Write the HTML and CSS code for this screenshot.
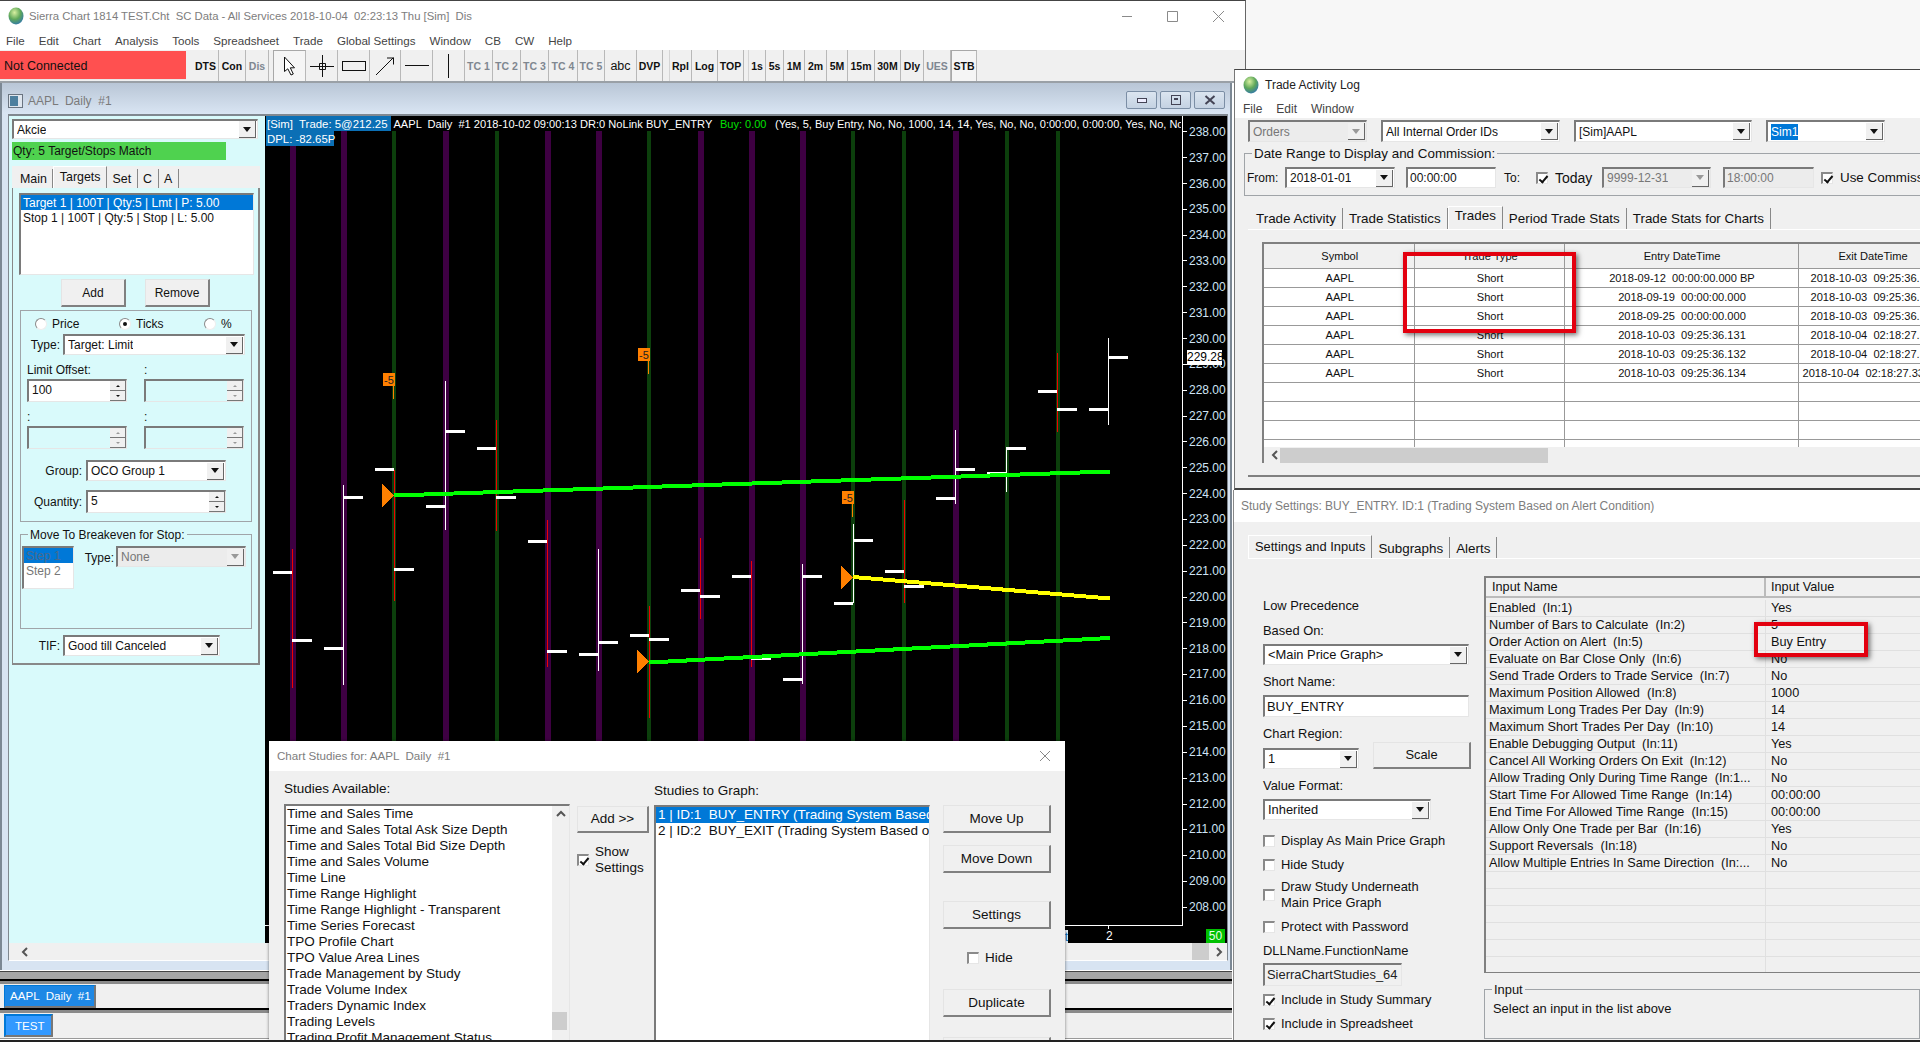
FILE: index.html
```html
<!DOCTYPE html>
<html lang="en">
  <head>
    <meta charset="UTF-8" />
    <title>Sierra Chart 1814 TEST.Cht</title>
    <link rel="stylesheet" href="styles.css">
  </head>
  <body>
    <div class="desktop">

      <!-- main window -->
      <div class="window main-window">
        <div class="titlebar">
          <svg class="globe" viewBox="0 0 16 18"><defs><radialGradient id="globeFill" cx="0.4" cy="0.3" r="0.8"><stop offset="0" stop-color="#d8f0a0"/><stop offset="0.5" stop-color="#5fa85a"/><stop offset="1" stop-color="#2a6fb8"/></radialGradient></defs><ellipse cx="8" cy="9" rx="7.5" ry="8.5" fill="url(#globeFill)"/></svg>
          <span class="title-text">Sierra Chart 1814 TEST.Cht  SC Data - All Services 2018-10-04  02:23:13 Thu [Sim]  Dis</span>
          <div class="window-controls">
            <svg viewBox="0 0 107 14" width="107" height="14"><path d="M0 7.5H10M45.5 2.5H55.5V12.5H45.5ZM91 2L102 13M102 2L91 13" fill="none" stroke="#8a8a8a"/></svg>
          </div>
        </div>
        <div class="menubar main-menu">
          <span>File</span><span>Edit</span><span>Chart</span><span>Analysis</span><span>Tools</span><span>Spreadsheet</span><span>Trade</span><span>Global Settings</span><span>Window</span><span>CB</span><span>CW</span><span>Help</span>
        </div>

        <div class="toolbar">
          <div class="status-box">Not Connected</div>
          <div class="tool-grid">
            <div class="tool">DTS</div><div class="tool">Con</div><div class="tool off">Dis</div>
            <div class="tool gap pressed"><svg width="13" height="20" viewBox="0 0 13 20"><path d="M1.5 1V15.5L4.8 12.8L8 19L10.3 18L7.3 11.8H11.5Z" fill="#fff" stroke="#111"/></svg></div>
            <div class="tool"><svg width="26" height="24" viewBox="0 0 26 24"><path d="M1 12.5H25M13.5 1V23M10.5 9.5H16.5V15.5H10.5Z" fill="none" stroke="#111"/></svg></div>
            <div class="tool"><svg width="26" height="12" viewBox="0 0 26 12"><rect x="1.5" y="1.5" width="23" height="9" fill="none" stroke="#111"/></svg></div>
            <div class="tool"><svg width="20" height="20" viewBox="0 0 20 20"><path d="M1 19L18.5 1.5M12 2H18.5V8.5" fill="none" stroke="#111"/></svg></div>
            <div class="tool"><svg width="24" height="3" viewBox="0 0 24 3"><path d="M0 1.5H24" stroke="#111"/></svg></div>
            <div class="tool"><svg width="3" height="24" viewBox="0 0 3 24"><path d="M1.5 0V24" stroke="#111"/></svg></div>
            <div class="tool off">TC 1</div><div class="tool off">TC 2</div><div class="tool off">TC 3</div><div class="tool off">TC 4</div><div class="tool off">TC 5</div>
            <div class="tool plain">abc</div><div class="tool">DVP</div>
            <div class="tool gap wide-gap">Rpl</div><div class="tool">Log</div><div class="tool">TOP</div>
            <div class="tool gap">1s</div><div class="tool">5s</div><div class="tool">1M</div><div class="tool">2m</div><div class="tool">5M</div><div class="tool">15m</div><div class="tool">30M</div><div class="tool">Dly</div><div class="tool off">UES</div><div class="tool pressed">STB</div>
          </div>
        </div>

        <!-- chart child window -->
        <div class="child-window">
          <div class="child-title">
            <svg class="child-icon" width="15" height="14" viewBox="0 0 15 14"><rect x="0.5" y="0.5" width="14" height="13" fill="#dfe6ee" stroke="#6a7480"/><rect x="2" y="2" width="8" height="10" fill="#4d7f9e"/></svg>
            <span class="child-name">AAPL  Daily  #1</span>
            <div class="child-controls">
              <div class="child-btn"><svg width="12" height="8" viewBox="0 0 12 8"><rect x="1.5" y="2.5" width="9" height="4" fill="#eef" stroke="#445"/></svg></div>
              <div class="child-btn"><svg width="12" height="10" viewBox="0 0 12 10"><rect x="1.5" y="0.5" width="9" height="9" fill="none" stroke="#445"/><rect x="4" y="3" width="4" height="2" fill="#445"/></svg></div>
              <div class="child-btn"><svg width="12" height="10" viewBox="0 0 12 10"><path d="M1.5 1L10.5 9M10.5 1L1.5 9" stroke="#445" stroke-width="2"/></svg></div>
            </div>
          </div>
          <div class="child-body">
            <div class="child-main">

              <!-- trade panel -->
              <div class="side-panel">
                <div class="combo w246"><span>Akcie</span><i class="combo-btn"></i></div>
                <div class="qty-bar">Qty: 5 Target/Stops Match</div>
                <div class="tabs panel-tabs">
                  <div class="tab">Main</div><div class="tab active">Targets</div><div class="tab">Set</div><div class="tab">C</div><div class="tab">A</div>
                </div>
                <div class="tab-pane">
                  <div class="listbox target-list">
                    <div class="list-row selected">Target 1 | 100T | Qty:5 | Lmt | P: 5.00</div>
                    <div class="list-row">Stop 1 | 100T | Qty:5 | Stop | L: 5.00</div>
                  </div>
                  <div class="target-buttons">
                    <div class="button">Add</div><div class="button">Remove</div>
                  </div>
                  <div class="groupbox target-box">
                    <div class="radio-row">
                      <div class="radio-item"><i class="radio"></i>Price</div>
                      <div class="radio-item"><i class="radio on"></i>Ticks</div>
                      <div class="radio-item"><i class="radio"></i>%</div>
                    </div>
                    <div class="form-row type-row">
                      <label class="row-label lw41">Type:</label>
                      <div class="combo w182"><span>Target: Limit</span><i class="combo-btn"></i></div>
                    </div>
                    <div class="offset-grid">
                      <div class="offset-cell">
                        <label>Limit Offset:</label>
                        <div class="spin"><span>100</span><div class="spin-btns"><i class="up"></i><i class="down"></i></div></div>
                      </div>
                      <div class="offset-cell">
                        <label>:</label>
                        <div class="spin disabled"><span></span><div class="spin-btns"><i class="up"></i><i class="down"></i></div></div>
                      </div>
                      <div class="offset-cell">
                        <label>:</label>
                        <div class="spin disabled"><span></span><div class="spin-btns"><i class="up"></i><i class="down"></i></div></div>
                      </div>
                      <div class="offset-cell">
                        <label>:</label>
                        <div class="spin disabled"><span></span><div class="spin-btns"><i class="up"></i><i class="down"></i></div></div>
                      </div>
                    </div>
                    <div class="form-row group-row">
                      <label class="row-label lw61">Group:</label>
                      <div class="combo w140"><span>OCO Group 1</span><i class="combo-btn"></i></div>
                    </div>
                    <div class="form-row qty-row">
                      <label class="row-label lw61">Quantity:</label>
                      <div class="spin w140"><span>5</span><div class="spin-btns"><i class="up"></i><i class="down"></i></div></div>
                    </div>
                  </div>
                  <div class="groupbox breakeven-box">
                    <span class="group-title">Move To Breakeven for Stop:</span>
                    <div class="listbox step-list disabled-list">
                      <div class="list-row selected">Step 1</div>
                      <div class="list-row">Step 2</div>
                    </div>
                    <label class="row-label step-type">Type:</label>
                    <div class="combo w130 disabled"><span>None</span><i class="combo-btn"></i></div>
                  </div>
                  <div class="form-row tif-row">
                    <label class="row-label lw48">TIF:</label>
                    <div class="combo w157"><span>Good till Canceled</span><i class="combo-btn"></i></div>
                  </div>
                </div>
              </div>

              <!-- chart -->
              <div class="chart">
                <svg class="chart-canvas" viewBox="265 116 962 829" width="962" height="829" shape-rendering="crispEdges">
                  <path d="M293 131V925M344 131V925M446 131V925M548 131V925M599 131V925M701 131V925M752 131V925M803 131V925M956 131V925" stroke="#3e0042" stroke-width="6"/>
                  <path d="M394 131V925M497 131V925M649 131V925M853 131V925M904 131V925M1007 131V925M1058 131V925" stroke="#0c3f0c" stroke-width="4"/>
                  <path d="M292.5 549V688M394.5 470V601M496.5 420V531M547.5 520V667M649.5 606V718M700.5 538V619M751.5 561V667M904.5 500V603M1057.5 353V432" stroke="#f00000"/>
                  <path d="M343.5 485V685M445.5 381V530M598.5 549V671M802.5 564V684M853.5 524V603M955.5 430V504M1006.5 447V492M1108.5 338V425" stroke="#fff"/>
                  <path d="M273 572.5H292M292 640.5H312M324 648.5H343M343 497.5H363M375 469.5H394M394 569.5H414M426 506.5H445M445 431.5H465M477 448.5H496M496 497.5H516M528 541.5H547M547 651.5H567M579 654.5H598M598 642.5H618M630 635.5H649M649 639.5H669M681 590.5H700M700 596.5H720M732 576.5H751M751 658.5H771M783 679.5H802M802 576.5H822M834 603.5H853M853 540.5H873M885 571.5H904M904 586.5H924M936 498.5H955M955 469.5H975M987 473.5H1006M1006 448.5H1026M1038 391.5H1057M1057 409.5H1077M1089 409.5H1108M1108 357.5H1128" stroke="#fff" stroke-width="3"/>
                  <path d="M394 495.5L1110 471.5M649 662.5L1110 638" stroke="#00ff00" stroke-width="4"/>
                  <path d="M853 577L1110 598.5" stroke="#ffff00" stroke-width="4"/>
                  <path d="M382 484L394 495.5L382 507ZM637 650L649 661.5L637 673ZM841 566L853 577.5L841 589Z" fill="#ff8000"/>
                  <path d="M393.5 386V399M648.5 361V374M852.5 504V517" stroke="#ff8000"/>
                  <rect x="383" y="373" width="12" height="13" fill="#ff8000"/>
                  <rect x="638" y="348" width="12" height="13" fill="#ff8000"/>
                  <rect x="842" y="491" width="12" height="13" fill="#ff8000"/>
                  <g class="flag-text" shape-rendering="auto">
                    <text x="384" y="384">-5</text><text x="639" y="359">-5</text><text x="843" y="502">-5</text>
                  </g>
                  <path d="M1182.5 116V925.5H265M1183 131.5h4M1183 157.5h4M1183 183.5h4M1183 209.5h4M1183 235.5h4M1183 260.5h4M1183 286.5h4M1183 312.5h4M1183 338.5h4M1183 364.5h4M1183 390.5h4M1183 416.5h4M1183 441.5h4M1183 467.5h4M1183 493.5h4M1183 519.5h4M1183 545.5h4M1183 571.5h4M1183 597.5h4M1183 622.5h4M1183 648.5h4M1183 674.5h4M1183 700.5h4M1183 726.5h4M1183 752.5h4M1183 778.5h4M1183 804.5h4M1183 829.5h4M1183 855.5h4M1183 881.5h4M1183 907.5h4M1108.5 925V929" fill="none" stroke="#fff"/>
                </svg>
                <div class="chart-head">
                  <div class="head-line"><span class="head-blue">[Sim]  Trade: 5@212.25</span><span class="head-main"> AAPL  Daily  #1 2018-10-02 09:00:13 DR:0 NoLink BUY_ENTRY</span><span class="head-green">Buy: 0.00</span><span class="head-args">(Yes, 5, Buy Entry, No, No, 1000, 14, 14, Yes, No, No, 0:00:00, 0:00:00, Yes, No, No)</span></div>
                  <div class="head-line"><span class="head-blue dpl">DPL: -82.65P</span></div>
                </div>
                <div class="price-axis">
                  <span>238.00</span><span>237.00</span><span>236.00</span><span>235.00</span><span>234.00</span><span>233.00</span><span>232.00</span><span>231.00</span><span>230.00</span><span>229.00</span><span>228.00</span><span>227.00</span><span>226.00</span><span>225.00</span><span>224.00</span><span>223.00</span><span>222.00</span><span>221.00</span><span>220.00</span><span>219.00</span><span>218.00</span><span>217.00</span><span>216.00</span><span>215.00</span><span>214.00</span><span>213.00</span><span>212.00</span><span>211.00</span><span>210.00</span><span>209.00</span><span>208.00</span>
                </div>
                <div class="last-price">229.28</div>
                <div class="time-month">Oct</div>
                <div class="time-label">2</div>
                <div class="bars-count">50</div>
              </div>
            </div>
            <div class="hscroll child-scroll">
              <svg class="chevron" width="8" height="10" viewBox="0 0 8 10"><path d="M6 1L2 5L6 9" fill="none" stroke="#555" stroke-width="2"/></svg>
              <div class="hscroll-end">
                <div class="thumb"></div>
                <svg class="chevron" width="8" height="10" viewBox="0 0 8 10"><path d="M2 1L6 5L2 9" fill="none" stroke="#555" stroke-width="2"/></svg>
              </div>
            </div>
          </div>
        </div>

        <div class="gray-bar"></div>
        <div class="task-row"><div class="task-btn">AAPL  Daily  #1</div></div>
        <div class="task-row"><div class="task-btn test">TEST</div></div>
      </div>

      <!-- chart studies dialog -->
      <div class="window studies-dialog">
        <div class="titlebar dialog-title">
          <span class="title-text">Chart Studies for: AAPL  Daily  #1</span>
          <svg class="dialog-close" width="12" height="12" viewBox="0 0 12 12"><path d="M1 1L11 11M11 1L1 11" stroke="#888"/></svg>
        </div>
        <div class="dialog-body">
          <div class="dialog-col available-col">
            <label>Studies Available:</label>
            <div class="listbox studies-list">
              <div class="list-rows">
                <div class="list-row tall">Time and Sales Time</div>
                <div class="list-row tall">Time and Sales Total Ask Size Depth</div>
                <div class="list-row tall">Time and Sales Total Bid Size Depth</div>
                <div class="list-row tall">Time and Sales Volume</div>
                <div class="list-row tall">Time Line</div>
                <div class="list-row tall">Time Range Highlight</div>
                <div class="list-row tall">Time Range Highlight - Transparent</div>
                <div class="list-row tall">Time Series Forecast</div>
                <div class="list-row tall">TPO Profile Chart</div>
                <div class="list-row tall">TPO Value Area Lines</div>
                <div class="list-row tall">Trade Management by Study</div>
                <div class="list-row tall">Trade Volume Index</div>
                <div class="list-row tall">Traders Dynamic Index</div>
                <div class="list-row tall">Trading Levels</div>
                <div class="list-row tall">Trading Profit Management Status</div>
              </div>
              <div class="vscroll">
                <svg width="10" height="8" viewBox="0 0 10 8"><path d="M1 6L5 2L9 6" fill="none" stroke="#555" stroke-width="2"/></svg>
                <div class="thumb"></div>
              </div>
            </div>
          </div>
          <div class="dialog-col add-col">
            <div class="button add-button">Add &gt;&gt;</div>
            <div class="check-row show-settings"><i class="check on"></i><span>Show<br>Settings</span></div>
          </div>
          <div class="dialog-col graph-col">
            <label>Studies to Graph:</label>
            <div class="listbox graph-list">
              <div class="list-row selected">1 | ID:1  BUY_ENTRY (Trading System Based on Alert Condition)</div>
              <div class="list-row">2 | ID:2  BUY_EXIT (Trading System Based on Alert Condition)</div>
            </div>
          </div>
          <div class="dialog-col action-col">
            <div class="button move-up">Move Up</div>
            <div class="button move-down">Move Down</div>
            <div class="button settings-btn">Settings</div>
            <div class="check-row hide-check"><i class="check"></i><span>Hide</span></div>
            <div class="button duplicate-btn">Duplicate</div>
            <div class="button next-btn"></div>
          </div>
        </div>
      </div>

      <!-- trade activity log -->
      <div class="window trade-window">
        <div class="titlebar trade-title">
          <svg class="globe" viewBox="0 0 16 18"><ellipse cx="8" cy="9" rx="7.5" ry="8.5" fill="url(#globeFill)"/></svg>
          <span class="title-text dark">Trade Activity Log</span>
        </div>
        <div class="menubar trade-menu"><span>File</span><span>Edit</span><span>Window</span></div>
        <div class="trade-body">
          <div class="combo-strip">
            <div class="combo w119 disabled"><span>Orders</span><i class="combo-btn"></i></div>
            <div class="combo w179"><span>All Internal Order IDs</span><i class="combo-btn"></i></div>
            <div class="combo w178"><span>[Sim]AAPL</span><i class="combo-btn"></i></div>
            <div class="combo w119"><span class="text-selected">Sim1</span><i class="combo-btn"></i></div>
          </div>
          <div class="groupbox date-box">
            <span class="group-title">Date Range to Display and Commission:</span>
            <div class="date-row">
              <label class="from-label">From:</label>
              <div class="combo w110"><span>2018-01-01</span><i class="combo-btn"></i></div>
              <div class="textbox w90"><span>00:00:00</span></div>
              <label class="to-label">To:</label>
              <i class="check on"></i>
              <label class="today-label">Today</label>
              <div class="combo w109 disabled"><span>9999-12-31</span><i class="combo-btn"></i></div>
              <div class="textbox w91 disabled"><span>18:00:00</span></div>
              <i class="check on use-check"></i>
              <label class="use-label">Use Commissions</label>
            </div>
          </div>
          <div class="tabs trade-tabs">
            <div class="tab">Trade Activity</div><div class="tab">Trade Statistics</div><div class="tab active">Trades</div><div class="tab">Period Trade Stats</div><div class="tab">Trade Stats for Charts</div>
          </div>
          <div class="trade-pane">
            <div class="trade-table-wrap">
              <table class="trade-table">
                <thead>
                  <tr><th class="col-symbol">Symbol</th><th class="col-type">Trade Type</th><th class="col-entry">Entry DateTime</th><th class="col-exit">Exit DateTime</th></tr>
                </thead>
                <tbody>
                  <tr><td>AAPL</td><td>Short</td><td>2018-09-12  00:00:00.000 BP</td><td class="exit">2018-10-03  09:25:36.131</td></tr>
                  <tr><td>AAPL</td><td>Short</td><td>2018-09-19  00:00:00.000</td><td class="exit">2018-10-03  09:25:36.132</td></tr>
                  <tr><td>AAPL</td><td>Short</td><td>2018-09-25  00:00:00.000</td><td class="exit">2018-10-03  09:25:36.134</td></tr>
                  <tr><td>AAPL</td><td>Short</td><td>2018-10-03  09:25:36.131</td><td class="exit">2018-10-04  02:18:27.336</td></tr>
                  <tr><td>AAPL</td><td>Short</td><td>2018-10-03  09:25:36.132</td><td class="exit">2018-10-04  02:18:27.337</td></tr>
                  <tr><td>AAPL</td><td>Short</td><td>2018-10-03  09:25:36.134</td><td class="exit long">2018-10-04  02:18:27.338</td></tr>
                  <tr><td></td><td></td><td></td><td></td></tr>
                  <tr><td></td><td></td><td></td><td></td></tr>
                  <tr><td></td><td></td><td></td><td></td></tr>
                  <tr><td></td><td></td><td></td><td></td></tr>
                </tbody>
              </table>
            </div>
            <div class="hscroll trade-scroll">
              <svg class="chevron" width="8" height="10" viewBox="0 0 8 10"><path d="M6 1L2 5L6 9" fill="none" stroke="#555" stroke-width="2"/></svg>
              <div class="thumb"></div>
            </div>
          </div>
        </div>
        <div class="callout trade-callout"></div>
      </div>

      <!-- study settings -->
      <div class="window study-window">
        <div class="titlebar study-title">
          <span class="title-text">Study Settings: BUY_ENTRY. ID:1 (Trading System Based on Alert Condition)</span>
        </div>
        <div class="study-body">
          <div class="tabs study-tabs">
            <div class="tab active">Settings and Inputs</div><div class="tab">Subgraphs</div><div class="tab">Alerts</div>
          </div>
          <div class="study-columns">
            <div class="study-left">
              <div class="field-label low">Low Precedence</div>
              <div class="field-label">Based On:</div>
              <div class="combo w206 field"><span>&lt;Main Price Graph&gt;</span><i class="combo-btn"></i></div>
              <div class="field-label">Short Name:</div>
              <div class="textbox w206 field tall-box"><span>BUY_ENTRY</span></div>
              <div class="field-label">Chart Region:</div>
              <div class="region-row">
                <div class="combo w96"><span>1</span><i class="combo-btn"></i></div>
                <div class="button scale-btn">Scale</div>
              </div>
              <div class="field-label">Value Format:</div>
              <div class="combo w168 field"><span>Inherited</span><i class="combo-btn"></i></div>
              <div class="check-row study-check first"><i class="check"></i><span>Display As Main Price Graph</span></div>
              <div class="check-row study-check"><i class="check"></i><span>Hide Study</span></div>
              <div class="check-row study-check two-line"><i class="check"></i><span>Draw Study Underneath<br>Main Price Graph</span></div>
              <div class="check-row study-check"><i class="check"></i><span>Protect with Password</span></div>
              <div class="field-label dll">DLLName.FunctionName</div>
              <div class="textbox w139 disabled dll-box"><span>SierraChartStudies_64</span></div>
              <div class="check-row study-check include"><i class="check on"></i><span>Include in Study Summary</span></div>
              <div class="check-row study-check"><i class="check on"></i><span>Include in Spreadsheet</span></div>
            </div>
            <div class="study-right">
              <div class="input-grid">
                <div class="grid-head"><div class="name-col">Input Name</div><div class="value-col">Input Value</div></div>
                <div class="grid-row"><div class="name-col">Enabled  (In:1)</div><div class="value-col">Yes</div></div>
                <div class="grid-row"><div class="name-col">Number of Bars to Calculate  (In:2)</div><div class="value-col">5</div></div>
                <div class="grid-row"><div class="name-col">Order Action on Alert  (In:5)</div><div class="value-col">Buy Entry</div></div>
                <div class="grid-row"><div class="name-col">Evaluate on Bar Close Only  (In:6)</div><div class="value-col">No</div></div>
                <div class="grid-row"><div class="name-col">Send Trade Orders to Trade Service  (In:7)</div><div class="value-col">No</div></div>
                <div class="grid-row"><div class="name-col">Maximum Position Allowed  (In:8)</div><div class="value-col">1000</div></div>
                <div class="grid-row"><div class="name-col">Maximum Long Trades Per Day  (In:9)</div><div class="value-col">14</div></div>
                <div class="grid-row"><div class="name-col">Maximum Short Trades Per Day  (In:10)</div><div class="value-col">14</div></div>
                <div class="grid-row"><div class="name-col">Enable Debugging Output  (In:11)</div><div class="value-col">Yes</div></div>
                <div class="grid-row"><div class="name-col">Cancel All Working Orders On Exit  (In:12)</div><div class="value-col">No</div></div>
                <div class="grid-row"><div class="name-col">Allow Trading Only During Time Range  (In:1...</div><div class="value-col">No</div></div>
                <div class="grid-row"><div class="name-col">Start Time For Allowed Time Range  (In:14)</div><div class="value-col">00:00:00</div></div>
                <div class="grid-row"><div class="name-col">End Time For Allowed Time Range  (In:15)</div><div class="value-col">00:00:00</div></div>
                <div class="grid-row"><div class="name-col">Allow Only One Trade per Bar  (In:16)</div><div class="value-col">Yes</div></div>
                <div class="grid-row"><div class="name-col">Support Reversals  (In:18)</div><div class="value-col">No</div></div>
                <div class="grid-row"><div class="name-col">Allow Multiple Entries In Same Direction  (In:...</div><div class="value-col">No</div></div>
                <div class="grid-row"><div class="name-col"></div><div class="value-col"></div></div>
                <div class="grid-row"><div class="name-col"></div><div class="value-col"></div></div>
                <div class="grid-row"><div class="name-col"></div><div class="value-col"></div></div>
                <div class="grid-row"><div class="name-col"></div><div class="value-col"></div></div>
                <div class="grid-row"><div class="name-col"></div><div class="value-col"></div></div>
                <div class="grid-row"><div class="name-col"></div><div class="value-col"></div></div>
              </div>
              <div class="groupbox input-box">
                <span class="group-title">Input</span>
                <div class="input-hint">Select an input in the list above</div>
              </div>
            </div>
          </div>
        </div>
        <div class="callout study-callout"></div>
      </div>

    </div>
  </body>
</html>
```

FILE: styles.css
```css
* {
  box-sizing: border-box;
}
html, body {
  margin: 0;
  padding: 0;
}
body {
  font-family: "Liberation Sans", Arial, sans-serif;
  font-size: 12px;
  line-height: 16px;
  color: #111;
}
span, label, td, th,
.tab, .list-row, .name-col, .value-col, .head-line, .button, .task-btn,
.qty-bar, .status-box, .field-label, .radio-item {
  white-space: pre;
}
i {
  font-style: normal;
}
label {
  display: block;
}
.desktop {
  position: relative;
  width: 1920px;
  height: 1042px;
  overflow: hidden;
  background-color: #f7f7f7;
  border-bottom: 2px solid #222;
}

/* windows */
.window {
  position: absolute;
  overflow: hidden;
  background-color: #f0f0f0;
}
.main-window {
  left: 0;
  top: 0;
  width: 1246px;
  height: 1040px;
  background-color: #fff;
  border-top: 1px solid #444;
  border-right: 1px solid #666;
}
.titlebar {
  display: flex;
  align-items: center;
  height: 30px;
  padding-left: 8px;
  background-color: #fff;
}
.globe {
  width: 16px;
  height: 18px;
  margin-right: 5px;
  flex-shrink: 0;
}
.title-text {
  color: #7d7d7d;
}
.main-window .title-text {
  font-size: 11.3px;
}
.title-text.dark {
  color: #222;
}
.window-controls {
  margin-left: auto;
  margin-right: 16px;
  height: 14px;
}
.menubar {
  display: flex;
  align-items: center;
  background-color: #fff;
  height: 19px;
  color: #444;
}
.main-menu {
  padding-left: 6px;
  gap: 14px;
  font-size: 11.6px;
}

/* toolbar */
.toolbar {
  display: flex;
  height: 33px;
  background-color: #f0f0f0;
  border-bottom: 2px solid #9aa0a6;
}
.status-box {
  width: 186px;
  height: 29px;
  margin-top: 1px;
  padding: 7px 0 0 4px;
  background-color: #ff5050;
  border-bottom: 1px solid #e8e8e8;
  font-size: 12.5px;
}
.tool-grid {
  display: grid;
  grid-auto-flow: column;
  grid-template-columns: 26px 27px 23px 37px 32px 32px 31px 32px 32px 28px 28px 28px 29px 27px 32px 26px 29px 26px 26px 22px 18px 21px 22px 21px 27px 26px 23px 27px 26px;
  margin-left: 7px;
  font-size: 10.5px;
  font-weight: bold;
}
.tool {
  display: flex;
  align-items: center;
  justify-content: center;
  height: 31px;
  border-right: 1px solid #b8b8b8;
  color: #111;
}
.tool.off {
  color: #7f8790;
}
.tool.plain {
  font-weight: normal;
  font-size: 12.5px;
}
.tool.gap {
  margin-left: 4px;
  border-left: 1px solid #d4d4d4;
}
.tool.wide-gap {
  margin-left: 6px;
}
.tool.pressed {
  background-color: #f5f5f5;
  border-top: 1px solid #a8a8a8;
  border-left: 1px solid #a8a8a8;
}

/* chart child window */
.child-window {
  width: 1232px;
  height: 887px;
  padding: 0 4px 8px 6px;
  background-color: #d8e4f2;
  border-left: 2px solid #7c8894;
  border-right: 2px solid #7c8894;
}
.child-title {
  display: flex;
  align-items: center;
  height: 31px;
  margin: 0 -4px 0 -6px;
  padding: 5px 0 0 6px;
  background: linear-gradient(#b9c6d6, #d9e5f3);
}
.child-icon {
  margin-right: 5px;
}
.child-name {
  color: #7a7a7a;
}
.child-controls {
  display: flex;
  margin-left: auto;
  margin-right: 5px;
  margin-top: -2px;
  gap: 3px;
}
.child-btn {
  display: flex;
  align-items: center;
  justify-content: center;
  width: 31px;
  height: 18px;
  border: 1px solid #7b8ea5;
  border-radius: 2px;
  background: linear-gradient(#dbe5f0, #c4d2e2);
}
.child-body {
  width: 1220px;
  border: 1px solid #808890;
  border-top: 2px solid #808890;
  border-bottom: 1px solid #fff;
}
.child-main {
  display: flex;
  height: 827px;
}

/* trade panel */
.side-panel {
  width: 256px;
  flex-shrink: 0;
  padding: 3px 0 0 3px;
  background-color: #d9fafb;
}
.combo {
  display: flex;
  align-items: center;
  justify-content: space-between;
  height: 21px;
  padding: 0 1px 0 3px;
  background-color: #fff;
  border-top: 2px solid #7a7a7a;
  border-left: 2px solid #7a7a7a;
  border-right: 1px solid #e6e6e6;
  border-bottom: 1px solid #e6e6e6;
  flex-shrink: 0;
}
.combo span {
  overflow: hidden;
}
.combo-btn {
  display: flex;
  align-items: center;
  justify-content: center;
  width: 17px;
  height: 17px;
  background-color: #f0f0f0;
  border-right: 1px solid #666;
  border-bottom: 1px solid #666;
  flex-shrink: 0;
}
.combo-btn::after {
  content: "";
  border-left: 4px solid transparent;
  border-right: 4px solid transparent;
  border-top: 5px solid #111;
}
.combo.disabled {
  background-color: #ececec;
  color: #777;
}
.combo.disabled .combo-btn::after {
  border-top-color: #999;
}
.w246 { width: 246px; }
.w206 { width: 206px; }
.w182 { width: 182px; }
.w179 { width: 179px; }
.w178 { width: 178px; }
.w168 { width: 168px; }
.w157 { width: 157px; }
.w140 { width: 140px; }
.w139 { width: 139px; }
.w130 { width: 130px; }
.w119 { width: 119px; }
.w110 { width: 110px; }
.w109 { width: 109px; }
.w96 { width: 96px; }
.w91 { width: 91px; }
.w90 { width: 90px; }
.side-panel > .combo {
  height: 20px;
}
.qty-bar {
  width: 214px;
  height: 18px;
  margin-top: 3px;
  padding-left: 1px;
  background-color: #4fd24f;
  line-height: 19px;
}

/* tabs */
.tabs {
  display: flex;
  align-items: flex-end;
}
.tab {
  height: 21px;
  padding: 3px 7px 0;
  background-color: #f0f0f0;
  border-right: 1px solid #888;
}
.tab.active {
  height: 23px;
  padding-top: 1px;
  border-top: 1px solid #fff;
  border-left: 1px solid #fff;
}
.panel-tabs {
  width: 248px;
  height: 22px;
  margin-top: 6px;
  padding-left: 2px;
  background-color: #f0f0f0;
  font-size: 12.4px;
}
.panel-tabs .tab {
  background-color: #f0f0f0;
  height: 19px;
  padding: 2px 5.5px 0;
}
.panel-tabs .tab:first-child {
  padding-left: 6px;
}
.panel-tabs .tab.active {
  height: 22px;
  padding: 2px 5.5px 0;
}
.tab-pane {
  width: 248px;
  height: 477px;
  padding: 5px 6px 0;
  border-left: 1px solid #888;
  border-right: 2px solid #888;
  border-bottom: 2px solid #888;
}
.listbox {
  background-color: #fff;
  border-top: 2px solid #7a7a7a;
  border-left: 2px solid #7a7a7a;
  border-right: 1px solid #e6e6e6;
  border-bottom: 1px solid #e6e6e6;
  overflow: hidden;
}
.list-row {
  height: 15px;
  line-height: 16px;
  padding-left: 2px;
  overflow: hidden;
}
.list-row.tall {
  height: 16px;
  line-height: 16px;
}
.list-row.selected {
  background-color: #0078d7;
  color: #fff;
}
.target-list {
  width: 235px;
  height: 82px;
}
.target-buttons {
  display: flex;
  justify-content: center;
  gap: 19px;
  margin-top: 4px;
}
.button {
  display: flex;
  align-items: center;
  justify-content: center;
  width: 65px;
  height: 28px;
  background-color: #f0f0f0;
  border-top: 1px solid #e4e4e4;
  border-left: 1px solid #e4e4e4;
  border-right: 2px solid #808080;
  border-bottom: 2px solid #808080;
}

/* group boxes */
.groupbox {
  position: relative;
  border: 1px solid #a0a4a8;
}
.group-title {
  position: absolute;
  top: -8px;
  left: 7px;
  padding: 0 2px;
  background-color: #f0f0f0;
}
.side-panel .group-title {
  background-color: #d9fafb;
}
.target-box {
  width: 232px;
  height: 212px;
  margin: 3px 0 0 1px;
}
.radio-row {
  display: grid;
  grid-template-columns: 84px 85px auto;
  padding: 2px 0 0 14px;
  height: 23px;
}
.radio-item {
  display: flex;
  align-items: center;
  gap: 5px;
}
.radio {
  position: relative;
  width: 12px;
  height: 12px;
  border-radius: 50%;
  background-color: #fff;
  border: 1px solid #8a8a8a;
  border-right-color: #eee;
  border-bottom-color: #eee;
}
.radio.on::after {
  content: "";
  display: block;
  width: 4px;
  height: 4px;
  margin: 3px;
  border-radius: 50%;
  background-color: #111;
}
.form-row {
  display: flex;
  align-items: center;
}
.row-label {
  text-align: right;
  margin-right: 3px;
  flex-shrink: 0;
}
.lw41 { width: 39px; }
.lw61 { width: 61px; margin-right: 4px; }
.lw48 { width: 40px; }
.offset-grid {
  display: grid;
  grid-template-columns: 100px 100px;
  column-gap: 17px;
  row-gap: 7px;
  margin: 7px 0 0 6px;
}
.offset-cell label {
  height: 16px;
  margin-bottom: 1px;
}
.spin {
  display: flex;
  justify-content: space-between;
  height: 23px;
  padding: 1px 0 0 3px;
  background-color: #fff;
  border-top: 2px solid #7a7a7a;
  border-left: 2px solid #7a7a7a;
  border-right: 1px solid #e6e6e6;
  border-bottom: 1px solid #e6e6e6;
}
.spin.disabled {
  background-color: #d9fafb;
}
.spin-btns {
  display: flex;
  flex-direction: column;
  width: 16px;
  margin-top: -1px;
  flex-shrink: 0;
}
.spin-btns i {
  display: flex;
  align-items: center;
  justify-content: center;
  height: 10px;
  background-color: #f0f0f0;
  border-right: 1px solid #777;
  border-bottom: 1px solid #777;
}
.spin-btns .up::after {
  content: "";
  border-left: 2px solid transparent;
  border-right: 2px solid transparent;
  border-bottom: 2px solid #111;
}
.spin-btns .down::after {
  content: "";
  border-left: 2px solid transparent;
  border-right: 2px solid transparent;
  border-top: 2px solid #111;
}
.spin.disabled .up::after {
  border-bottom-color: #999;
}
.spin.disabled .down::after {
  border-top-color: #999;
}
.group-row {
  margin-top: 11px;
}
.qty-row {
  margin-top: 9px;
}
.breakeven-box {
  display: flex;
  align-items: flex-start;
  width: 232px;
  height: 95px;
  margin: 12px 0 0 1px;
  padding: 11px 0 0 1px;
}
.step-list {
  width: 52px;
  height: 43px;
  flex-shrink: 0;
}
.disabled-list {
  color: #777;
}
.disabled-list .list-row.selected {
  color: #4c6a8a;
}
.step-type {
  width: 30px;
  margin: 4px 2px 0 10px;
}
.tif-row {
  margin-top: 6px;
  padding-left: 1px;
}

/* chart */
.chart {
  position: relative;
  flex: 1;
  background-color: #000;
  color: #fff;
  overflow: hidden;
}
.chart-canvas {
  display: block;
}
.flag-text text {
  font-size: 11px;
  fill: #222;
}
.chart-head {
  position: absolute;
  left: 1px;
  top: 0;
  width: 915px;
  overflow: hidden;
}
.head-line {
  display: flex;
  height: 15px;
  line-height: 16px;
}
.head-blue {
  width: 125px;
  padding-left: 1px;
  font-size: 11.4px;
  background-color: #0b6fb5;
  flex-shrink: 0;
}
.head-blue.dpl {
  width: 68px;
}
.head-main {
  width: 329px;
  font-size: 11.1px;
  flex-shrink: 0;
}
.head-green {
  width: 55px;
  color: #00e000;
  font-size: 11px;
  flex-shrink: 0;
}
.head-args {
  font-size: 11px;
  flex-shrink: 0;
}
.price-axis {
  position: absolute;
  left: 924px;
  top: 4px;
  display: grid;
  grid-auto-rows: 25.83px;
  color: #cfe4f5;
}
.price-axis span {
  line-height: 25.83px;
}
.last-price {
  position: absolute;
  left: 922px;
  top: 234px;
  width: 35px;
  height: 15px;
  background-color: #fff;
  color: #000;
  line-height: 15px;
  text-align: center;
}
.time-month {
  position: absolute;
  left: 778px;
  top: 814px;
  width: 25px;
  height: 15px;
  line-height: 15px;
  text-align: right;
  background-color: #e8f0f8;
  color: #0b6fb5;
}
.time-label {
  position: absolute;
  left: 841px;
  top: 812px;
}
.bars-count {
  position: absolute;
  left: 941px;
  top: 813px;
  width: 19px;
  height: 15px;
  background-color: #00c000;
  color: #e8ffe8;
  line-height: 15px;
  text-align: center;
}
.hscroll {
  display: flex;
  align-items: center;
  background-color: #f0f0f0;
}
.child-scroll {
  height: 17px;
  padding: 0 4px 0 12px;
  justify-content: space-between;
}
.hscroll-end {
  display: flex;
  align-items: center;
}
.child-scroll .thumb {
  width: 17px;
  height: 17px;
  margin-right: 6px;
  background-color: #cdcdcd;
}

/* bottom bars */
.gray-bar {
  width: 1232px;
  height: 8px;
  margin-top: 1px;
  background-color: #a6a6a6;
  border-top: 1px solid #444;
}
.task-row {
  width: 1232px;
  height: 29px;
  padding: 4px 0 0 4px;
  border-top: 2px solid #000;
  background: linear-gradient(#8a8a8a 3px, #f0f0f0 3px);
}
.task-row:last-child {
  height: 31px;
  border-bottom: 1px solid #999;
}
.task-btn {
  width: 92px;
  height: 23px;
  line-height: 20px;
  padding-left: 5px;
  background-color: #1e88e5;
  color: #fff;
  font-size: 11.6px;
  border: 1px solid #0078d7;
  border-right: 2px solid #777;
  border-bottom: 2px solid #777;
}
.task-btn.test {
  width: 49px;
  padding-left: 9px;
  font-size: 11.6px;
  background-color: #3399ff;
  border: 2px solid #0078d7;
  border-right: 2px solid #777;
  border-bottom: 2px solid #777;
}

/* chart studies dialog */
.studies-dialog {
  left: 269px;
  top: 741px;
  width: 796px;
  height: 299px;
  box-shadow: 0 0 3px rgba(0, 0, 0, 0.5);
}
.dialog-title {
  padding-right: 10px;
}
.dialog-title .title-text {
  font-size: 11.6px;
}
.dialog-close {
  margin-left: auto;
  margin-right: 4px;
}
.dialog-body {
  display: flex;
  padding-left: 15px;
  font-size: 13.5px;
}
.dialog-col {
  flex-shrink: 0;
}
.available-col {
  width: 286px;
  padding-top: 10px;
}
.available-col label {
  margin-bottom: 7px;
}
.studies-list {
  display: flex;
  height: 240px;
}
.list-rows {
  flex: 1;
  overflow: hidden;
}
.studies-list .list-row {
  padding-left: 1px;
}
.vscroll {
  width: 17px;
  height: 240px;
  background-color: #f0f0f0;
  text-align: center;
}
.vscroll svg {
  display: block;
  margin: 4px auto 0;
}
.vscroll .thumb {
  height: 18px;
  width: 15px;
  margin-top: 194px;
  background-color: #cdcdcd;
}
.add-col {
  width: 72px;
  margin-left: 7px;
  padding-top: 35px;
}
.add-button {
  width: 72px;
  height: 27px;
}
.check-row {
  display: flex;
  align-items: center;
  gap: 6px;
}
.check {
  display: block;
  position: relative;
  width: 12px;
  height: 12px;
  background-color: #fff;
  border-top: 2px solid #8a8a8a;
  border-left: 2px solid #8a8a8a;
  border-right: 1px solid #e6e6e6;
  border-bottom: 1px solid #e6e6e6;
  flex-shrink: 0;
}
.check.on::after {
  content: "";
  position: absolute;
  left: 2.5px;
  top: 0;
  width: 3px;
  height: 7px;
  border-right: 2px solid #111;
  border-bottom: 2px solid #111;
  transform: rotate(40deg);
}
.show-settings {
  margin-top: 11px;
}
.graph-col {
  width: 276px;
  margin-left: 5px;
  padding-top: 12px;
}
.graph-col label {
  margin-bottom: 6px;
}
.graph-list {
  height: 240px;
}
.graph-list .list-row {
  height: 16px;
  line-height: 16px;
}
.action-col {
  width: 108px;
  margin-left: 13px;
  padding-top: 34px;
}
.action-col .button {
  width: 108px;
}
.move-up { height: 28px; }
.move-down { margin-top: 12px; }
.settings-btn { margin-top: 28px; }
.hide-check {
  margin: 21px 0 0 24px;
  height: 16px;
}
.duplicate-btn { margin-top: 23px; }
.next-btn { margin-top: 20px; }

/* trade activity log */
.trade-window {
  left: 1234px;
  top: 69px;
  width: 686px;
  height: 421px;
  border-top: 1px solid #444;
  border-left: 1px solid #777;
  border-bottom: 2px solid #444;
}
.trade-title .globe {
  margin: 0 6px 0 0;
}
.trade-menu {
  padding-left: 8px;
  gap: 14px;
  height: 18px;
}
.trade-body {
  position: relative;
}
.combo-strip {
  display: flex;
  gap: 14px;
  padding: 2px 0 0 13px;
}
.combo-strip .combo {
  height: 22px;
}
.text-selected {
  background-color: #0078d7;
  color: #fff;
}
.date-box {
  width: 700px;
  height: 43px;
  margin: 11px 0 0 9px;
  padding: 13px 0 0 2px;
}
.date-box .group-title, .trade-tabs, .use-label {
  font-size: 13.4px;
}
.today-label {
  font-size: 14px;
}
.date-row {
  display: flex;
  align-items: center;
}
.date-row label {
  flex-shrink: 0;
}
.textbox {
  display: flex;
  align-items: center;
  height: 21px;
  padding-left: 2px;
  background-color: #fff;
  border-top: 2px solid #7a7a7a;
  border-left: 2px solid #7a7a7a;
  border-right: 1px solid #e6e6e6;
  border-bottom: 1px solid #e6e6e6;
  flex-shrink: 0;
}
.textbox.disabled {
  background-color: #ececec;
  color: #777;
}
.from-label {
  width: 38px;
}
.date-row .textbox.w90 {
  margin-left: 11px;
}
.to-label {
  width: 32px;
  margin-left: 8px;
}
.today-label {
  width: 47px;
  margin-left: 7px;
}
.date-row .textbox.w91 {
  margin-left: 12px;
}
.use-check {
  margin-left: 7px;
}
.use-label {
  margin-left: 7px;
}
.trade-tabs {
  margin: 10px 0 0 15px;
  height: 23px;
}
.trade-tabs .tab {
  padding-left: 6px;
  padding-right: 6px;
}
.trade-pane {
  height: 248px;
  margin: 0 0 0 13px;
  padding: 12px 0 0 14px;
  border-top: 1px solid #fff;
  border-bottom: 2px solid #808080;
}
.trade-table-wrap {
  height: 205px;
  overflow: hidden;
  border-left: 2px solid #808080;
  border-top: 2px solid #808080;
}
.trade-table {
  table-layout: fixed;
  width: 682px;
  border-collapse: collapse;
  font-size: 11.1px;
}
.trade-table th {
  height: 24px;
  padding: 0 0 0 2px;
  font-weight: normal;
  background-color: #f0f0f0;
  border-right: 1px solid #999;
  border-bottom: 1px solid #999;
}
.trade-table td {
  height: 19px;
  padding: 0 0 0 2px;
  text-align: center;
  background-color: #fff;
  border-right: 1px solid #999;
  border-bottom: 1px solid #999;
}
.trade-table td.exit {
  text-align: left;
  padding-left: 12px;
}
.trade-table td.exit.long {
  padding-left: 4px;
}
.col-symbol { width: 150px; }
.col-type { width: 150px; }
.col-entry { width: 234px; }
.col-exit { width: 148px; }
.trade-scroll {
  height: 16px;
  border-left: 2px solid #808080;
  padding-left: 7px;
}
.trade-scroll .thumb {
  width: 268px;
  height: 15px;
  margin-left: 1px;
  background-color: #cdcdcd;
}
.callout {
  position: absolute;
  border: 4px solid #e3000f;
  box-shadow: 2px 2px 5px rgba(0, 0, 0, 0.55);
}
.trade-callout {
  left: 168px;
  top: 182px;
  width: 173px;
  height: 81px;
}

/* study settings */
.study-window {
  left: 1233px;
  top: 490px;
  width: 687px;
  height: 550px;
  border-left: 1px solid #888;
}
.study-title {
  height: 32px;
  padding-left: 7px;
}
.study-body {
  padding-top: 15px;
  font-size: 12.9px;
}
.study-tabs {
  margin-left: 14px;
  height: 22px;
  border-bottom: 1px solid #fff;
  font-size: 13.4px;
}
.study-tabs .tab {
  padding: 4px 6px 0;
}
.study-tabs .tab.active {
  padding: 3px 6px 0;
  font-size: 12.9px;
}
.study-columns {
  display: flex;
}
.study-left {
  width: 221px;
  margin-left: 29px;
  padding-top: 39px;
  flex-shrink: 0;
}
.field-label {
  height: 16px;
  margin-top: 9px;
}
.field-label.low {
  margin-top: 0;
}
.field {
  margin-top: 5px;
}
.tall-box {
  height: 22px;
}
.region-row {
  display: flex;
  align-items: flex-end;
  height: 27px;
}
.scale-btn {
  width: 98px;
  height: 27px;
  margin-left: 14px;
}
.study-check {
  margin-top: 8px;
  height: 16px;
}
.study-check.first {
  margin-top: 13px;
}
.study-check.two-line {
  height: 32px;
  margin-top: 6px;
}
.field-label.dll {
  margin-top: 8px;
}
.dll-box {
  height: 23px;
  margin-top: 4px;
}
.dll-box.disabled {
  background-color: #f0f0f0;
  color: #222;
}
.study-check.include {
  margin-top: 6px;
}
.study-right {
  width: 440px;
  padding-top: 17px;
}
.input-grid {
  height: 397px;
  overflow: hidden;
  background-color: #f0f0f0;
  border-top: 2px solid #808080;
  border-left: 2px solid #808080;
  border-bottom: 1px solid #808080;
  font-size: 12.7px;
}
.grid-head {
  display: flex;
  height: 20px;
  line-height: 19px;
  margin-bottom: 2px;
  border-bottom: 2px solid #bbb;
}
.grid-row {
  display: flex;
  height: 17px;
  line-height: 17px;
  border-bottom: 1px solid #e0e0e0;
}
.name-col {
  width: 280px;
  padding-left: 3px;
  border-right: 1px solid #e0e0e0;
  overflow: hidden;
  flex-shrink: 0;
}
.grid-head .name-col {
  padding-left: 6px;
  border-right: 2px solid #bbb;
}
.value-col {
  padding-left: 5px;
}
.input-box {
  height: 50px;
  margin-top: 16px;
}
.input-hint {
  padding: 11px 0 0 8px;
}
.study-callout {
  left: 520px;
  top: 132px;
  width: 114px;
  height: 35px;
}
```
